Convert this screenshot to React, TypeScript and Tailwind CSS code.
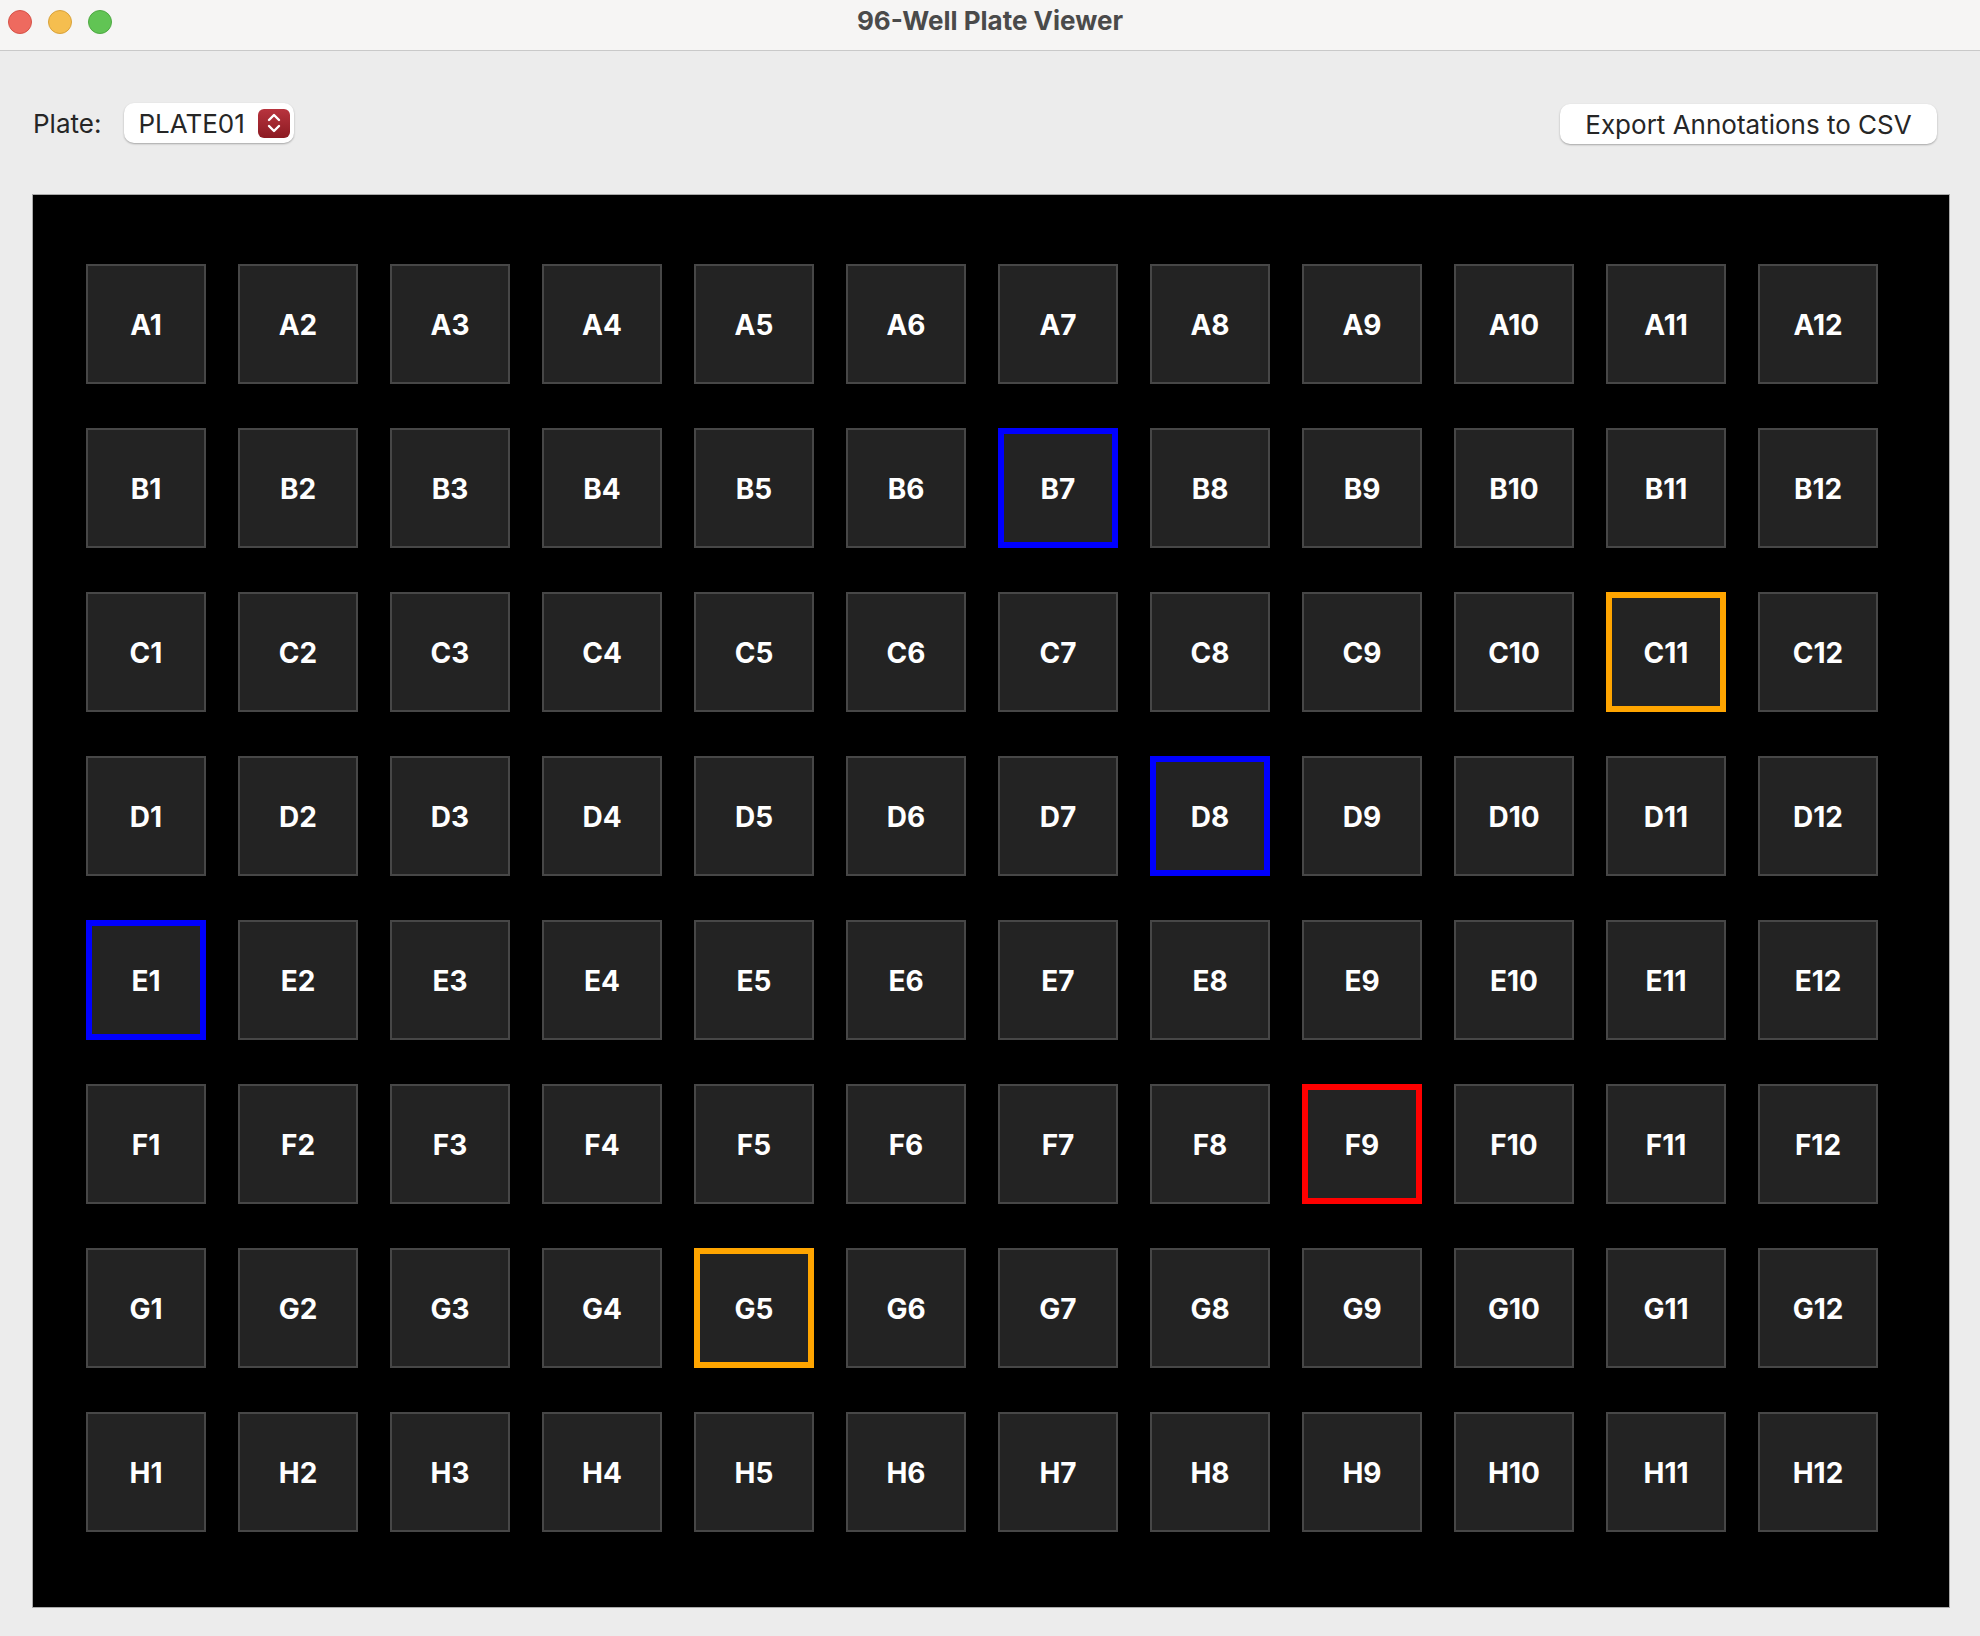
import React from "react";

const ROWS = ["A", "B", "C", "D", "E", "F", "G", "H"];
const COLS = [1, 2, 3, 4, 5, 6, 7, 8, 9, 10, 11, 12];

// wells that carry an annotation colour
const marked: Record<string, string> = {
	B7: "border-[6px] border-[#0000ff]",
	D8: "border-[6px] border-[#0000ff]",
	E1: "border-[6px] border-[#0000ff]",
	C11: "border-[6px] border-[#ffa500]",
	G5: "border-[6px] border-[#ffa500]",
	F9: "border-[6px] border-[#ff0000]",
};

const Well = ({ id }: { id: string }) => {
	const border = marked[id] ?? "border-2 border-[#474747]";
	return (
		<div
			className={`box-border size-[120px] pt-[2px] flex items-center justify-center bg-[#232323] text-white text-[28px] font-bold ${border}`}
		>
			{id}
		</div>
	);
};

const TitleBar = () => {
	return (
		<div className="relative h-[51px] bg-[#f6f5f4] border-b border-[#c9c9c9] flex justify-center">
			<div className="absolute left-[8px] top-[10px] flex gap-[16px]">
				<span className="size-[24px] rounded-full bg-[#ee6a5f] border border-[#d65247]" />
				<span className="size-[24px] rounded-full bg-[#f5be4f] border border-[#d9a23a]" />
				<span className="size-[24px] rounded-full bg-[#61c454] border border-[#4ea942]" />
			</div>
			<div className="pt-[1px] text-[26px] font-bold text-[#4a4a4a]">96-Well Plate Viewer</div>
		</div>
	);
};

const Stepper = () => {
	return (
		<div className="w-[32px] h-[29px] rounded-[6px] bg-gradient-to-b from-[#b8343e] to-[#8c1a22] flex items-center justify-center">
			<svg width={16} height={22} viewBox="0 0 16 22" fill="none">
				<path d="M3 8l5-5 5 5" stroke="white" strokeWidth={2.4} strokeLinecap="round" strokeLinejoin="round" />
				<path d="M3 14l5 5 5-5" stroke="white" strokeWidth={2.4} strokeLinecap="round" strokeLinejoin="round" />
			</svg>
		</div>
	);
};

const Toolbar = () => {
	return (
		<div className="h-[143px] pl-[33px] pr-[43px] pt-[52px] flex items-start justify-between text-[26px] text-[#262626]">
			<div className="flex items-center gap-[23px] h-[40px]">
				<span>Plate:</span>
				<div className="w-[170px] h-[40px] rounded-[10px] bg-white shadow-[0_1px_2px_rgba(0,0,0,0.3)] flex items-center justify-between pl-[14px] pr-[4px]">
					<span>PLATE01</span>
					<Stepper />
				</div>
			</div>
			<button className="w-[377px] h-[40px] mt-[1px] rounded-[10px] bg-white shadow-[0_1px_2px_rgba(0,0,0,0.3)] flex items-center justify-center">
				Export Annotations to CSV
			</button>
		</div>
	);
};

export default function App() {
	return (
		<div className="w-[1980px] h-[1636px] bg-[#ececec] flex flex-col font-['Inter','Liberation_Sans',sans-serif] overflow-hidden">
			<TitleBar />
			<Toolbar />
			<div className="ml-[32px] w-[1918px] h-[1414px] border border-[#a9a9a9] bg-black pl-[53px] pt-[69px]">
				<div className="grid grid-cols-[repeat(12,120px)] gap-x-[32px] gap-y-[44px]">
					{ROWS.map((r) => COLS.map((c) => <Well key={r + c} id={r + c} />))}
				</div>
			</div>
		</div>
	);
}
